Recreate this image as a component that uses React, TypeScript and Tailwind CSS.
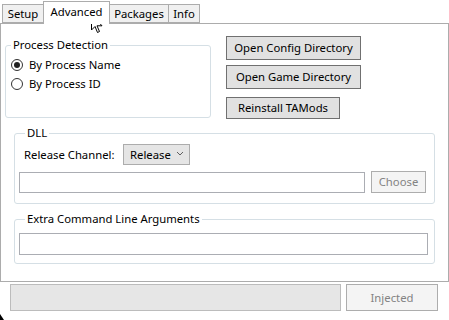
import React from "react";

const font = { fontFamily: '"Noto Sans", "Open Sans", sans-serif' };

function Tab({ label, active }: { label: string; active?: boolean }) {
  if (active) {
    return (
      <div className="h-[23px] w-[67px] -mb-px border border-b-0 border-[#acacac] bg-white flex items-start justify-center pt-[2px] z-10">
        {label}
      </div>
    );
  }
  return (
    <div className="h-[19px] w-[41px] border border-r-0 border-[#acacac] bg-[#f0f0f0] flex items-center justify-center">
      {label}
    </div>
  );
}

function Radio({ label, checked }: { label: string; checked?: boolean }) {
  return (
    <div className="flex items-center h-[16px]">
      <span className="w-[12px] h-[12px] rounded-full border border-[#333] bg-white flex items-center justify-center">
        {checked && <span className="w-[6px] h-[6px] rounded-full bg-[#212121]" />}
      </span>
      <span className="ml-[6px]">{label}</span>
    </div>
  );
}

function Button({ label, className }: { label: string; className: string }) {
  return (
    <div className={`border border-[#707070] bg-[#e1e1e1] flex items-center justify-center ${className}`}>
      {label}
    </div>
  );
}

export default function App() {
  return (
    <div className="relative w-[449px] h-[320px] bg-white text-[11.3px] leading-[16px] text-black overflow-hidden" style={font}>
      {/* tab strip */}
      <div className="flex items-end h-[23px] pl-[2px]">
        <Tab label="Setup" />
        <Tab label="Advanced" active />
        <div className="h-[19px] border border-l-0 border-[#acacac] bg-[#f0f0f0] flex items-center justify-center w-[59px]">Packages</div>
        <div className="h-[19px] border border-l-0 border-[#acacac] bg-[#f0f0f0] flex items-center justify-center w-[31px]">Info</div>
      </div>

      {/* tab pane */}
      <div className="w-[449px] h-[259px] border border-[#acacac] bg-white flex flex-col">
        <div className="flex items-start mt-[12px] ml-[4px]">
          <fieldset className="mt-px w-[206px] h-[81px] border border-[#d5dfe5] rounded-[3px]">
            <legend className="ml-[5px] px-[2px]">Process Detection</legend>
            <div className="flex flex-col gap-[3px] pl-[5px] pt-[4px]">
              <Radio label="By Process Name" checked />
              <Radio label="By Process ID" />
            </div>
          </fieldset>
          <div className="ml-[15px] flex flex-col items-start">
            <Button label="Open Config Directory" className="w-[135px] h-[24px]" />
            <Button label="Open Game Directory" className="w-[135px] h-[24px] mt-[5px]" />
            <Button label="Reinstall TAMods" className="w-[114px] h-[22px] mt-[8px]" />
          </div>
        </div>

        <fieldset className="mt-[6px] mx-[13px] border border-[#d5dfe5] rounded-[3px] pl-[4px] pr-[8px] pb-[10px]">
          <legend className="ml-[6px] px-[2px]">DLL</legend>
          <div className="flex items-center mt-[3px]">
            <span className="ml-[5px] w-[99px]">Release Channel:</span>
            <div className="w-[67px] h-[21px] border border-[#acacac] bg-[#e5e5e5] flex items-center pl-[6px] pr-[5px] justify-between">
              <span>Release</span>
              <svg width="8" height="5" viewBox="0 0 8 5" className="mb-[3px]">
                <path d="M1 1 L4 4 L7 1" fill="none" stroke="#606060" strokeWidth="1" />
              </svg>
            </div>
          </div>
          <div className="flex items-center mt-[6px]">
            <div className="flex-1 h-[21px] border border-[#abadb3] bg-white" />
            <div className="ml-[6px] w-[55px] h-[22px] border border-[#adadad] bg-[#f4f4f4] text-[#838383] flex items-center justify-center">
              Choose
            </div>
          </div>
        </fieldset>

        <fieldset className="mt-[7px] mx-[13px] border border-[#d5dfe5] rounded-[3px] pl-[4px] pr-[6px] pb-[8px]">
          <legend className="ml-[6px] px-[2px]">Extra Command Line Arguments</legend>
          <div className="mt-[6px] h-[22px] border border-[#abadb3] bg-white" />
        </fieldset>
      </div>

      {/* footer */}
      <div className="flex mt-[2px] ml-[10px]">
        <div className="w-[331px] h-[27px] border border-[#bcbcbc] bg-[#e6e6e6]" />
        <div className="ml-[5px] w-[92px] h-[27px] border border-[#adadad] bg-[#f4f4f4] text-[#838383] flex items-center justify-center">
          Injected
        </div>
      </div>

      {/* mouse pointer */}
      <svg className="absolute left-[91px] top-[14px]" width="12" height="20" viewBox="0 0 12 20">
        <path d="M0.5 0.5 L0.5 16 L4 12.5 L6.5 18.5 L8.5 17.5 L6 11.8 L11 11.8 Z" fill="white" stroke="black" strokeWidth="1" strokeLinejoin="round" />
      </svg>
      <svg className="absolute left-0 bottom-0" width="4" height="6" viewBox="0 0 4 6">
        <path d="M0 0 L4 6 L0 6 Z" fill="black" />
      </svg>
    </div>
  );
}
